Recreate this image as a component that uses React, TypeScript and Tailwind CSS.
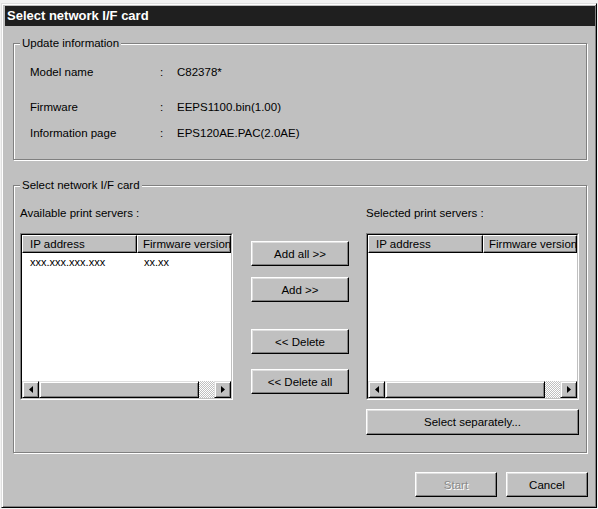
import React from 'react';

const font = 'font-["Liberation_Sans",Arial,sans-serif]';

interface GroupBoxProps {
  title: string;
  className?: string;
  children: React.ReactNode;
}

const GroupBox: React.FC<GroupBoxProps> = ({ title, className = '', children }) => (
  <div
    className={`relative border border-[#808080] shadow-[1px_1px_0_#fff,inset_1px_1px_0_#fff] ${className}`}
  >
    <span className="absolute -top-[8px] left-[6px] bg-[#c0c0c0] px-[2px] leading-[14px]">
      {title}
    </span>
    {children}
  </div>
);

interface ButtonProps {
  label: string;
  className?: string;
  disabled?: boolean;
}

const Button: React.FC<ButtonProps> = ({ label, className = '', disabled }) => (
  <button
    type="button"
    className={`flex items-center justify-center border border-t-white border-l-white border-r-black border-b-black bg-[#c0c0c0] shadow-[inset_-1px_-1px_0_#808080,inset_1px_1px_0_#dfdfdf] text-[11.5px] leading-[14px] ${
      disabled ? 'text-[#8a8a8a] [text-shadow:1px_1px_0_#fff]' : 'text-black'
    } ${className}`}
  >
    {label}
  </button>
);

const Arrow: React.FC<{ dir: 'left' | 'right' }> = ({ dir }) => (
  <svg width="4" height="7" viewBox="0 0 4 7">
    <polygon points={dir === 'left' ? '4,0 0,3.5 4,7' : '0,0 4,3.5 0,7'} fill="#000" />
  </svg>
);

const RaisedBox: React.FC<{ className?: string; children?: React.ReactNode }> = ({
  className = '',
  children,
}) => (
  <div
    className={`flex items-center justify-center border border-t-[#dfdfdf] border-l-[#dfdfdf] border-r-black border-b-black bg-[#c0c0c0] shadow-[inset_1px_1px_0_#fff,inset_-1px_-1px_0_#808080] ${className}`}
  >
    {children}
  </div>
);

interface ServerListProps {
  rows: { ip: string; version: string }[];
}

const ServerList: React.FC<ServerListProps> = ({ rows }) => (
  <div className="h-[167px] border border-t-[#808080] border-l-[#808080] border-r-white border-b-white">
    <div className="flex h-full flex-col overflow-hidden border border-t-black border-l-black border-r-[#c0c0c0] border-b-[#c0c0c0] bg-white">
      <div className="flex h-[18px] shrink-0 text-[11.5px] leading-[14px]">
        <div className="flex w-[115px] shrink-0 items-center border border-t-white border-l-white border-r-black border-b-black bg-[#c0c0c0] pl-[7px] shadow-[inset_-1px_-1px_0_#808080]">
          IP address
        </div>
        <div className="flex min-w-0 flex-1 items-center whitespace-nowrap border border-t-white border-l-white border-r-black border-b-black bg-[#c0c0c0] pl-[5px] shadow-[inset_-1px_-1px_0_#808080]">
          Firmware version
        </div>
      </div>
      <div className="flex-1 pt-[2px] text-[11px] leading-[14px]">
        {rows.map((r) => (
          <div key={r.ip} className="flex">
            <span className="w-[115px] pl-[8px]">{r.ip}</span>
            <span className="pl-[7px]">{r.version}</span>
          </div>
        ))}
      </div>
      <div className="flex h-[17px] shrink-0">
        <RaisedBox className="w-[17px]">
          <Arrow dir="left" />
        </RaisedBox>
        <RaisedBox className="flex-1" />
        <div className="w-[15px] bg-[repeating-conic-gradient(#c0c0c0_0%_25%,#ffffff_0%_50%)] bg-[length:2px_2px]" />
        <RaisedBox className="w-[17px]">
          <Arrow dir="right" />
        </RaisedBox>
      </div>
    </div>
  </div>
);

const infoRows = [
  { label: 'Model name', value: 'C82378*', mt: 'mt-0' },
  { label: 'Firmware', value: 'EEPS1100.bin(1.00)', mt: 'mt-[21px]' },
  { label: 'Information page', value: 'EPS120AE.PAC(2.0AE)', mt: 'mt-[12px]' },
];

export default function App() {
  return (
    <div className={`h-[509px] w-[598px] bg-[#f2f2f2] pl-[1px] pt-[3px] ${font}`}>
      <div className="flex h-[505px] w-[596px] flex-col border border-t-[#dfdfdf] border-l-[#dfdfdf] border-r-black border-b-black bg-[#c0c0c0] pl-[3px] pr-[1px] pt-[2px] text-[11.5px] leading-[14px] text-black shadow-[inset_1px_1px_0_#fff,inset_-1px_-1px_0_#808080]">
        <div className="flex h-[20px] items-center bg-[#1f1f1f] pl-[2px] text-[13px] font-bold text-white">
          Select network I/F card
        </div>

        <GroupBox title="Update information" className="mx-[8px] mt-[17px] h-[117px] pl-[16px] pt-[21px]">
          {infoRows.map((row) => (
            <div key={row.label} className={`grid grid-cols-[130px_17px_1fr] ${row.mt}`}>
              <span>{row.label}</span>
              <span>:</span>
              <span>{row.value}</span>
            </div>
          ))}
        </GroupBox>

        <GroupBox title="Select network I/F card" className="mx-[8px] mt-[25px] flex pb-[17px] pl-[6px] pr-[7px] pt-[20px]">
          <div className="w-[213px]">
            <div>Available print servers :</div>
            <div className="mt-[13px]">
              <ServerList rows={[{ ip: 'xxx.xxx.xxx.xxx', version: 'xx.xx' }]} />
            </div>
          </div>

          <div className="ml-[18px] mt-[35px] flex w-[98px] flex-col">
            <Button label="Add all >>" className="h-[25px]" />
            <Button label="Add >>" className="mt-[11px] h-[25px]" />
            <Button label="<< Delete" className="mt-[27px] h-[25px]" />
            <Button label="<< Delete all" className="mt-[15px] h-[25px]" />
          </div>

          <div className="ml-[17px] w-[213px]">
            <div>Selected print servers :</div>
            <div className="mt-[13px]">
              <ServerList rows={[]} />
            </div>
            <Button label="Select separately..." className="mt-[9px] h-[26px] w-full" />
          </div>
        </GroupBox>

        <div className="mt-[19px] flex justify-end gap-[9px] pr-[7px]">
          <Button label="Start" disabled className="h-[25px] w-[82px]" />
          <Button label="Cancel" className="h-[25px] w-[82px]" />
        </div>
      </div>
    </div>
  );
}
